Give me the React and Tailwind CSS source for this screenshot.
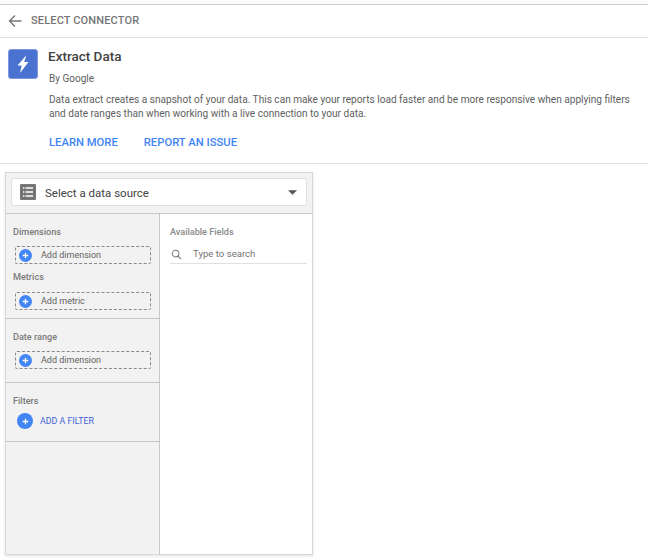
import React from "react";

function Plus({ size = "w-[13px] h-[13px]" }) {
  return (
    <span className={`${size} rounded-full bg-[#4285f4] flex items-center justify-center shrink-0`}>
      <svg viewBox="0 0 10 10" className="w-[7px] h-[7px]" fill="none" stroke="#fff" strokeWidth="1.8">
        <path d="M5 1v8M1 5h8" />
      </svg>
    </span>
  );
}

function AddBox({ label }) {
  return (
    <div className="ml-[9px] w-[136px] h-[18px] border border-dashed border-[#8a8a8a] rounded-[2px] flex items-center pl-[3px] gap-[9px] text-[9px] text-[#616161]">
      <Plus />
      <span className="pt-[1px]">{label}</span>
    </div>
  );
}

function Label({ children, className = "" }) {
  return <div className={`pl-[7px] pt-[1px] h-[12px] leading-[12px] text-[9.1px] font-medium text-[#7a7a7a] ${className}`}>{children}</div>;
}

export default function App() {
  return (
    <div className="w-[648px] h-[560px] bg-white overflow-hidden font-['Roboto',sans-serif]">
      <div className="h-[4px] bg-[#fafafa]" />
      <header className="h-[34px] border-t border-b border-[#cfcfcf] border-b-[#e0e0e0] flex items-center pl-[8px]">
        <svg viewBox="0 0 14 14" className="w-[14px] h-[14px]" fill="none" stroke="#757575" strokeWidth="1.4">
          <path d="M13.5 7H1.5M7 1.5 1.5 7 7 12.5" />
        </svg>
        <span className="ml-[9px] text-[11px] font-medium text-[#757575] tracking-[0.15px]">SELECT CONNECTOR</span>
      </header>

      <section className="h-[126px] border-b border-[#e0e0e0] flex pl-[8px] pt-[11px]">
        <div className="w-[30px] h-[30px] rounded-[3px] bg-[#4a73d1] border border-[#7d98dc] flex items-center justify-center shrink-0">
          <svg viewBox="0 0 12 18" className="w-[12px] h-[18px]" fill="#fff">
            <path d="M9.5 0 .5 10.6h4.2L3 18l8.5-11H7.2z" />
          </svg>
        </div>
        <div className="ml-[11px]">
          <h1 className="text-[13.5px] leading-[16px] -mt-[1px] -ml-[1px] font-medium text-[#424242]">Extract Data</h1>
          <p className="mt-[8px] text-[10px] leading-[14px] text-[#616161]">By Google</p>
          <p className="mt-[7px] w-[590px] text-[10.1px] leading-[14px] text-[#616161]">
            Data extract creates a snapshot of your data. This can make your reports load faster and be more responsive when applying filters and date ranges than when working with a live connection to your data.
          </p>
          <div className="mt-[15px] flex gap-[26px] text-[11.25px] leading-[14px] font-medium text-[#4285f4]">
            <span>LEARN MORE</span>
            <span>REPORT AN ISSUE</span>
          </div>
        </div>
      </section>

      <div className="ml-[5px] mt-[8px] w-[308px] h-[383px] border border-[#d8d8d8] bg-[#f2f2f2] flex flex-col shadow-[0_1px_3px_rgba(0,0,0,0.12)]">
        <div className="h-[41px] shrink-0 px-[5px] pt-[5px] border-b border-[#c8c8c8]">
          <div className="h-[28px] bg-white border border-[#e0e0e0] rounded-[3px] flex items-center pl-[8px] pr-[9px]">
            <svg viewBox="0 0 16 16" className="w-[16px] h-[16px] shrink-0">
              <rect width="16" height="16" rx="1" fill="#757575" />
              <path d="M3 4h10M3 8h10M3 12h10" stroke="#fff" strokeWidth="1.3" />
              <path d="M5 2.5v11" stroke="#757575" strokeWidth="1.2" />
            </svg>
            <span className="ml-[9px] pt-[3px] text-[11.5px] text-[#424242]">Select a data source</span>
            <svg viewBox="0 0 10 5" className="w-[9px] h-[5px] ml-auto" fill="#555">
              <path d="M0 0h10L5 5z" />
            </svg>
          </div>
        </div>

        <div className="flex-1 flex min-h-0">
          <div className="w-[154px] shrink-0 border-r border-[#c8c8c8] flex flex-col">
            <div className="h-[105px] shrink-0 border-b border-[#c4c4c4] pt-[11px]">
              <Label>Dimensions</Label>
              <div className="mt-[9px]"><AddBox label="Add dimension" /></div>
              <Label className="mt-[6px]">Metrics</Label>
              <div className="mt-[10px]"><AddBox label="Add metric" /></div>
            </div>
            <div className="h-[64px] shrink-0 border-b border-[#c4c4c4] pt-[11px]">
              <Label>Date range</Label>
              <div className="mt-[9px]"><AddBox label="Add dimension" /></div>
            </div>
            <div className="h-[59px] shrink-0 border-b border-[#c4c4c4] pt-[11px]">
              <Label>Filters</Label>
              <div className="mt-[7px] pl-[11px] flex items-center gap-[7px]">
                <Plus size="w-[16px] h-[16px]" />
                <span className="pt-[1px] text-[8.8px] text-[#3f63d8]">ADD A FILTER</span>
              </div>
            </div>
          </div>
          <div className="flex-1 bg-white pt-[12px] pl-[10px]">
            <div className="h-[12px] leading-[12px] text-[9.1px] font-medium text-[#8a8a8a]">Available Fields</div>
            <div className="mt-[7px] mr-[5px] h-[19px] border-b border-[#e0e0e0] flex items-center">
              <svg viewBox="0 0 12 12" className="ml-[1px] w-[11px] h-[11px]" fill="none" stroke="#757575" strokeWidth="1.1">
                <circle cx="5" cy="5" r="3.6" />
                <path d="M7.7 7.7 11 11" />
              </svg>
              <span className="ml-[11px] text-[9.6px] text-[#757575]">Type to search</span>
            </div>
          </div>
        </div>
      </div>
    </div>
  );
}
